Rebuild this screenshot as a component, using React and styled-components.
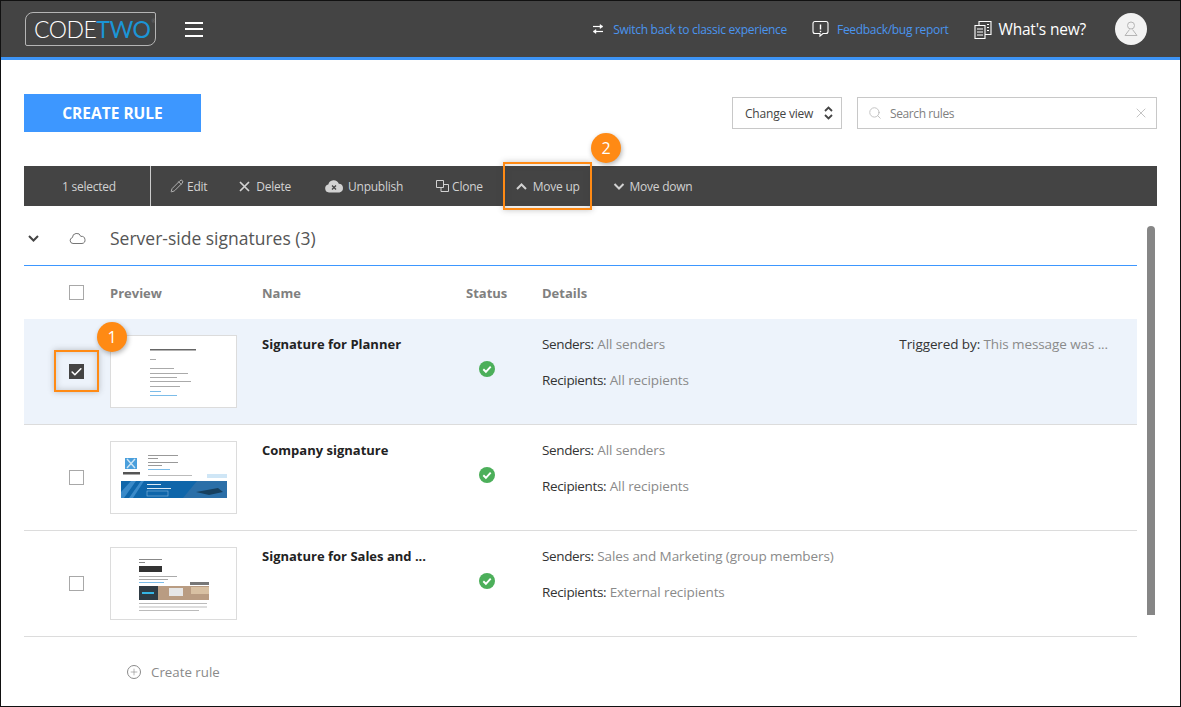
import React from 'react';
import styled, { createGlobalStyle } from 'styled-components';
import { X, Search, Pencil, Check, Plus } from 'lucide-react';

const GlobalStyle = createGlobalStyle`
  html, body { margin: 0; padding: 0; background: #fff; }
  body { font-family: "Open Sans", "Noto Sans", Arial, sans-serif; color: #333; }
  * { box-sizing: border-box; }
`;

const Frame = styled.div`
  width: 1181px;
  height: 707px;
  border: 1px solid #111;
  position: relative;
  overflow: hidden;
  background: #fff;
`;

const Header = styled.header`
  height: 59px;
  background: #444;
  border-bottom: 3px solid #3d94f6;
  display: flex;
  align-items: center;
  padding: 0 33px 0 24px;
`;

const Logo = styled.div`
  width: 131px;
  height: 34px;
  border: 1px solid #b5b5b5;
  border-radius: 8px 2px 8px 2px;
  display: flex;
  align-items: center;
  padding-left: 8px;
  font-family: Lato, "Open Sans", sans-serif;
  font-size: 23px;
  letter-spacing: -0.5px;
  font-weight: 300;
  color: #fff;
  margin-top: -1px;
`;

const LogoTwo = styled.span`
  color: #1b95d6;
  font-weight: 400;
`;

const LogoMark = styled.sup`
  font-size: 5px;
  color: #999;
  align-self: flex-start;
  margin: 6px 0 0 1px;
  line-height: 1;
`;

const Burger = styled.button`
  width: 18px;
  height: 15px;
  margin-left: 29px;
  padding: 0;
  border: 0;
  background: transparent;
  border-top: 2px solid #fff;
  border-bottom: 2px solid #fff;
  position: relative;
  &::after {
    content: '';
    position: absolute;
    left: 0;
    right: 0;
    top: 4.5px;
    height: 2px;
    background: #fff;
  }
`;

const HeaderRight = styled.div`
  margin-left: auto;
  display: flex;
  align-items: center;
`;

const HeaderLink = styled.a`
  display: flex;
  align-items: center;
  color: ${p => p.$white ? '#fff' : '#4a94ee'};
  font-size: ${p => p.$white ? '15.5px' : '12px'};
  letter-spacing: ${p => p.$white ? '-0.2px' : '-0.3px'};
  margin-left: ${p => p.$ml ?? 0}px;
  gap: ${p => p.$gap}px;
  white-space: nowrap;
`;

const Avatar = styled.div`
  width: 32px;
  height: 32px;
  border-radius: 50%;
  background: #f2f2f2;
  margin-left: 29px;
  display: flex;
  align-items: center;
  justify-content: center;
`;

const Main = styled.main`
  padding: 0 23px;
`;

const TopRow = styled.div`
  display: flex;
  align-items: center;
  justify-content: space-between;
  height: 106px;
  padding: 34px 0;
`;

const CreateButton = styled.button`
  width: 177px;
  height: 38px;
  background: #3d97ff;
  color: #fff;
  border: 0;
  font-family: inherit;
  font-size: 15.5px;
  font-weight: 700;
`;

const Filters = styled.div`
  display: flex;
  gap: 15px;
`;

const ViewSelect = styled.div`
  width: 110px;
  height: 32px;
  border: 1px solid #c8c8c8;
  display: flex;
  align-items: center;
  justify-content: space-between;
  padding: 0 8px 0 12px;
  font-size: 12px;
  letter-spacing: -0.2px;
  color: #444;
`;

const SearchBox = styled.div`
  width: 300px;
  height: 32px;
  border: 1px solid #c8c8c8;
  display: flex;
  align-items: center;
  padding: 0 7px 0 10px;
  font-size: 12px;
  letter-spacing: -0.4px;
  color: #808080;
`;

const SearchLabel = styled.span`
  flex: 1;
  margin-left: 8px;
`;

const Toolbar = styled.div`
  height: 40px;
  background: #444;
  display: flex;
  align-items: stretch;
  color: #d2d2d2;
  font-size: 12px;
  letter-spacing: -0.25px;
`;

const SelectedCount = styled.div`
  width: 127px;
  border-right: 1px solid #ccc;
  display: flex;
  align-items: center;
  padding-left: 38px;
`;

const ToolGroup = styled.div`
  display: flex;
  align-items: center;
  padding-left: 19px;
`;

const ToolItem = styled.div`
  display: flex;
  align-items: center;
  gap: ${p => p.$gap}px;
  margin-right: ${p => p.$mr ?? 0}px;
  white-space: nowrap;
`;

const ContentRow = styled.div`
  display: flex;
  align-items: flex-start;
`;

const RuleList = styled.div`
  width: 1113px;
`;

const Scrollbar = styled.div`
  width: 8px;
  height: 389px;
  margin: 20px 0 0 10px;
  background: #868686;
  border-radius: 4px 4px 0 0;
`;

const GroupHead = styled.div`
  height: 60px;
  border-bottom: 1px solid #3d97ff;
  display: flex;
  align-items: center;
  padding-top: 5px;
`;

const GroupToggle = styled.div`
  width: 45px;
  display: flex;
  align-items: center;
  padding-left: 4px;
`;

const GroupIcon = styled.div`
  width: 41px;
  display: flex;
  align-items: center;
`;

const GroupTitle = styled.h2`
  margin: 0;
  font-size: 17.5px;
  font-weight: 400;
  color: #555;
`;

const cols = '86px 152px 204px 76px 1fr';

const ColHead = styled.div`
  display: grid;
  grid-template-columns: ${cols};
  align-items: center;
  height: 53px;
  font-size: 13px;
  font-weight: 700;
  color: #808080;
`;

const CheckCell = styled.div`
  padding-left: 45px;
  display: flex;
  align-items: center;
`;

const CheckBox = styled.div`
  width: 15px;
  height: 15px;
  border: 1px solid ${p => p.$on ? '#444' : '#a8a8a8'};
  background: ${p => p.$on ? '#444' : '#fff'};
  display: flex;
  align-items: center;
  justify-content: center;
`;

const Row = styled.div`
  display: grid;
  grid-template-columns: ${cols};
  height: 106px;
  border-bottom: 1px solid #dcdcdc;
  background: ${p => p.$selected ? '#edf3fb' : '#fff'};
  align-items: center;
`;

const Thumb = styled.div`
  width: 127px;
  height: 73px;
  border: 1px solid #dcdcdc;
  background: #fff;
  overflow: hidden;
  svg { display: block; filter: blur(0.45px); }
`;

const RuleName = styled.div`
  align-self: start;
  padding-top: 16px;
  font-size: 13px;
  font-weight: 700;
  color: #222;
  white-space: nowrap;
`;

const StatusCell = styled.div`
  padding: 0 0 6px 13px;
  display: flex;
  align-items: center;
`;

const Details = styled.div`
  display: flex;
  justify-content: space-between;
  align-self: start;
  padding: 17px 29px 0 0;
  font-size: 13.5px;
  color: #333;
  letter-spacing: -0.1px;
`;

const DetailLines = styled.div`
  display: flex;
  flex-direction: column;
  gap: 19px;
`;

const DetailLine = styled.div`
  line-height: 17px;
  white-space: nowrap;
`;

const DetailLabel = styled.span`
  letter-spacing: -0.35px;
`;

const Muted = styled.span`
  color: #8a8a8a;
`;

const CreateLink = styled.div`
  display: flex;
  align-items: center;
  gap: 10px;
  height: 69px;
  padding-left: 103px;
  font-size: 13.3px;
  color: #8a8a8a;
`;

const PlusRing = styled.div`
  width: 14px;
  height: 14px;
  border: 1px solid #8a8a8a;
  border-radius: 50%;
  display: flex;
  align-items: center;
  justify-content: center;
`;

const Highlight = styled.div`
  position: absolute;
  left: ${p => p.$x}px;
  top: ${p => p.$y}px;
  width: ${p => p.$w}px;
  height: ${p => p.$h}px;
  border: 2px solid #ff8a14;
  box-shadow: 0 0 6px rgba(60, 60, 60, .3), inset 0 0 6px rgba(60, 60, 60, .25);
  pointer-events: none;
`;

const Badge = styled.div`
  position: absolute;
  left: ${p => p.$x}px;
  top: ${p => p.$y}px;
  width: 30px;
  height: 30px;
  border-radius: 50%;
  background: #ff8a14;
  color: #fff;
  font-size: 16px;
  display: flex;
  align-items: center;
  justify-content: center;
  box-shadow: 1px 2px 5px rgba(0, 0, 0, .3);
`;

const OkIcon = () => (
  <svg width="16" height="16" viewBox="0 0 16 16">
    <circle cx="8" cy="8" r="8" fill="#4caf5a" />
    <path d="M4.300 8.300l2.600 2.500 4.800-5.100" fill="none" stroke="#fff" strokeWidth="1.900" />
  </svg>
);

const Chevron = ({ up, color = '#d2d2d2', w = 11 }) => (
  <svg width={w} height="7" viewBox="0 0 11 7" fill="none" stroke={color} strokeWidth="2">
    <path d={up ? 'M1 6l4.500-4.500L10 6' : 'M1 1l4.500 4.500L10 1'} />
  </svg>
);

// greeked lines, the thumbnails are too small to read in the reference
const Lines = ({ x, items, color = '#aaa', h = 1 }) => items.map(([y, w], i) => (
  <rect key={i} x={x} y={y} width={w} height={h} fill={color} />
));

const ThumbPlanner = () => (
  <svg width="125" height="71" viewBox="0 0 125 71">
    <Lines x={39} color="#666" h={1.500} items={[[13, 46]]} />
    <Lines x={39} items={[[23, 6], [32, 24], [37, 38], [41, 27], [45, 41], [50, 30]]} />
    <Lines x={39} color="#7cbce8" items={[[55, 11], [59, 27]]} />
  </svg>
);

const ThumbCompany = () => (
  <svg width="125" height="71" viewBox="0 0 125 71">
    <rect x="14" y="16" width="12" height="11" fill="#4a9fdc" />
    <path d="M16 17l8 9M24 17l-8 9" stroke="#cfe6f6" strokeWidth="1.400" />
    <rect x="12" y="30" width="17" height="2.500" fill="#555" />
    <Lines x={37} color="#999" items={[[13, 30], [16, 10], [20, 30], [23, 14]]} />
    <Lines x={37} color="#7cbce8" items={[[27, 22]]} />
    <Lines x={37} color="#bbb" items={[[33, 44]]} />
    <rect x="96" y="32" width="20" height="4" fill="#cfe6f6" />
    <rect x="10" y="39" width="106" height="17" fill="#0f66aa" />
    <path d="M10 50l10-11h5L13 56h-3zM18 56l12-17h3L22 56z" fill="#3a8ac9" />
    <path d="M72 56l14-17h30v17z" fill="#2b6fa8" />
    <path d="M85 50l22-4 5 4-14 3z" fill="#17405f" />
    <Lines x={36} color="#dcebf6" items={[[42, 14], [46, 24]]} />
    <rect x="36" y="49" width="21" height="5" fill="none" stroke="#9cc5e5" strokeWidth=".5" />
  </svg>
);

const ThumbSales = () => (
  <svg width="125" height="71" viewBox="0 0 125 71">
    <Lines x={28} color="#888" items={[[11, 23], [14, 6]]} />
    <rect x="28" y="18" width="23" height="6" fill="#333" />
    <Lines x={28} color="#aaa" items={[[28, 38], [31, 29]]} />
    <Lines x={28} color="#7cbce8" items={[[34, 25]]} />
    <rect x="79" y="34" width="19" height="3" fill="#777" />
    <rect x="28" y="38" width="70" height="14" fill="#b99c82" />
    <rect x="28" y="38" width="19" height="14" fill="#2f3b44" />
    <rect x="31" y="44" width="12" height="2" fill="#35b5e5" />
    <rect x="58" y="40" width="14" height="8" fill="#e6e6e6" />
    <rect x="80" y="39" width="18" height="7" fill="#d8c0a2" />
    <Lines x={28} color="#bbb" items={[[55, 68], [58.500, 68], [62, 60]]} />
  </svg>
);

const rules = [
  { name: 'Signature for Planner', senders: 'All senders', recipients: 'All recipients', trigger: 'This message was ...', Preview: ThumbPlanner, selected: true },
  { name: 'Company signature', senders: 'All senders', recipients: 'All recipients', Preview: ThumbCompany },
  { name: 'Signature for Sales and ...', senders: 'Sales and Marketing (group members)', recipients: 'External recipients', Preview: ThumbSales },
];

const App = () => {
  return (
    <Frame>
      <GlobalStyle />
      <Header>
        <Logo>CODE<LogoTwo>TWO</LogoTwo><LogoMark>®</LogoMark></Logo>
        <Burger aria-label="Menu" />
        <HeaderRight>
          <HeaderLink $gap={9}>
            <svg width="12" height="12" viewBox="0 0 12 12" fill="#fff" stroke="#fff" strokeWidth="1.200">
              <path d="M1 3.500h7" fill="none" />
              <path d="M8 1.500l3 2-3 2zM4 6.500l-3 2 3 2z" strokeWidth=".5" />
              <path d="M4 8.500h7" fill="none" />
            </svg>
            Switch back to classic experience
          </HeaderLink>
          <HeaderLink $ml={25} $gap={8}>
            <svg width="17" height="18" viewBox="0 0 17 18" fill="none" stroke="#fff" strokeWidth="1.100">
              <path d="M3 1.500h11a2 2 0 0 1 2 2v8a2 2 0 0 1-2 2h-3l-3 2.500v-2.500H3a2 2 0 0 1-2-2v-8a2 2 0 0 1 2-2z" />
              <path d="M8.500 4.500v5M8.500 10.800v1.400" strokeWidth="1.400" />
            </svg>
            Feedback/bug report
          </HeaderLink>
          <HeaderLink $white $ml={25} $gap={7}>
            <svg width="18" height="19" viewBox="0 0 18 19" fill="none" stroke="#fff" strokeWidth="1.100">
              <path d="M1 5.500h10v13H1zM5 5.500V1.500h12v13h-6" />
              <path d="M3 9h6M3 12h6M3 15h6M13 4.500h2M13 7.500h2M13 10.500h2" />
            </svg>
            What's new?
          </HeaderLink>
          <Avatar>
            <svg width="14" height="16" viewBox="0 0 14 16" fill="none" stroke="#b5b5b5" strokeWidth="1">
              <circle cx="7" cy="4.500" r="3.500" />
              <path d="M5.500 8.500L1 14.500h12L8.500 8.500" />
            </svg>
          </Avatar>
        </HeaderRight>
      </Header>
      <Main>
        <TopRow>
          <CreateButton>CREATE RULE</CreateButton>
          <Filters>
            <ViewSelect>
              Change view
              <svg width="9" height="14" viewBox="0 0 9 14" fill="none" stroke="#444" strokeWidth="1.800">
                <path d="M1 5l3.500-3.500L8 5M1 9l3.500 3.500L8 9" />
              </svg>
            </ViewSelect>
            <SearchBox>
              <Search size={14} color="#bbb" strokeWidth={1.500} />
              <SearchLabel>Search rules</SearchLabel>
              <X size={16} color="#bbb" strokeWidth={1.300} />
            </SearchBox>
          </Filters>
        </TopRow>
        <Toolbar>
          <SelectedCount>1 selected</SelectedCount>
          <ToolGroup>
            <ToolItem $mr={32} $gap={3}><Pencil size={14} strokeWidth={1.300} />Edit</ToolItem>
            <ToolItem $mr={33} $gap={6}>
              <svg width="11" height="11" viewBox="0 0 11 11" fill="none" stroke="#d2d2d2" strokeWidth="1.700">
                <path d="M1 1l9 9M10 1l-9 9" />
              </svg>
              Delete
            </ToolItem>
            <ToolItem $mr={33} $gap={4}>
              <svg width="20" height="14" viewBox="0 0 20 14">
                <path d="M5 13.500a4 4 0 0 1-.7-7.900A5.500 5.500 0 0 1 14.800 4.800 4.400 4.400 0 0 1 15.500 13.500z" fill="#d2d2d2" />
                <path d="M8 6.500l4 4M12 6.500l-4 4" stroke="#444" strokeWidth="1.300" />
              </svg>
              Unpublish
            </ToolItem>
            <ToolItem $mr={33} $gap={3}>
              <svg width="13" height="12" viewBox="0 0 13 12" fill="none" stroke="#d2d2d2" strokeWidth="1">
                <path d="M.5.500h7v7h-7zM5 7.500v4h7.500v-7h-5" />
              </svg>
              Clone
            </ToolItem>
            <ToolItem $mr={33} $gap={6}><Chevron up />Move up</ToolItem>
            <ToolItem $gap={5}><Chevron w={12} />Move down</ToolItem>
          </ToolGroup>
        </Toolbar>
        <ContentRow>
          <RuleList>
            <GroupHead>
              <GroupToggle><Chevron color="#444" /></GroupToggle>
              <GroupIcon>
                <svg width="17" height="11" viewBox="0 0 17 11" fill="none" stroke="#666" strokeWidth=".9">
                  <path d="M4 10.500a3 3 0 0 1-.6-5.900A4.300 4.300 0 0 1 11.800 3.400 3.500 3.500 0 0 1 13 10.500z" />
                </svg>
              </GroupIcon>
              <GroupTitle>Server-side signatures (3)</GroupTitle>
            </GroupHead>
            <ColHead>
              <CheckCell><CheckBox /></CheckCell>
              <div>Preview</div>
              <div>Name</div>
              <div>Status</div>
              <div>Details</div>
            </ColHead>
            {rules.map(({ name, senders, recipients, trigger, Preview, selected }) => (
              <Row key={name} $selected={selected}>
                <CheckCell>
                  <CheckBox $on={selected}>
                    {selected && <Check size={14} color="#fff" strokeWidth={3} />}
                  </CheckBox>
                </CheckCell>
                <Thumb><Preview /></Thumb>
                <RuleName>{name}</RuleName>
                <StatusCell><OkIcon /></StatusCell>
                <Details>
                  <DetailLines>
                    <DetailLine><DetailLabel>Senders:</DetailLabel> <Muted>{senders}</Muted></DetailLine>
                    <DetailLine><DetailLabel>Recipients:</DetailLabel> <Muted>{recipients}</Muted></DetailLine>
                  </DetailLines>
                  {trigger && <DetailLine>Triggered by: <Muted>{trigger}</Muted></DetailLine>}
                </Details>
              </Row>
            ))}
            <CreateLink>
              <PlusRing><Plus size={10} color="#8a8a8a" strokeWidth={1.500} /></PlusRing>
              Create rule
            </CreateLink>
          </RuleList>
          <Scrollbar />
        </ContentRow>
      </Main>
      <Highlight $x={502} $y={161} $w={89} $h={48} />
      <Badge $x={590} $y={132}>2</Badge>
      <Highlight $x={53} $y={349} $w={45} $h={42} />
      <Badge $x={96} $y={321}>1</Badge>
    </Frame>
  );
};

export default App;
